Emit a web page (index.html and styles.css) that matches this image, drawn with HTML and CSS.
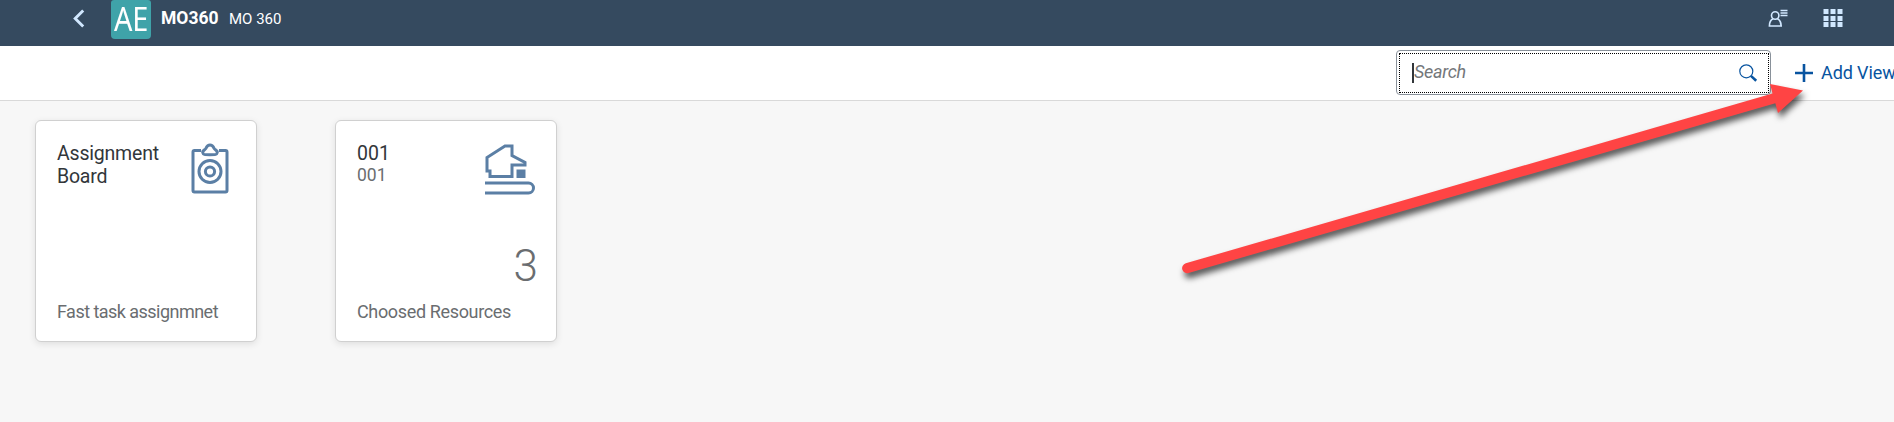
FILE: index.html
```html
<!DOCTYPE html>
<html lang="en">
<head>
<meta charset="utf-8">
<title>MO360</title>
<link rel="stylesheet" href="styles.css">
</head>
<body>
<header class="shell">
  <svg class="back" width="12" height="19" viewBox="0 0 12 19"><path d="M10.200 1.500 2.200 9.500l8 8" fill="none" stroke="#d1e8ff" stroke-width="2.900"/></svg>
  <div class="logo"><span class="logo-text">AE</span></div>
  <h1 class="title">MO360</h1>
  <span class="subtitle">MO 360</span>
  <div class="shell-actions">
    <svg width="20" height="20" viewBox="0 0 20 20" fill="none" stroke="#d1e8ff" stroke-width="1.600"><circle cx="7.200" cy="7.500" r="3.700"/><path d="M5 10.800C2.500 12 1.400 13.800 1.400 18h11.800c0-4.200-1.200-6-3.800-7.200"/><path d="M12.500 2.500h7M12.500 5h7M12.500 7.500h7" stroke-width="1.300"/></svg>
    <svg width="20" height="20" viewBox="0 0 20 20" fill="#d1e8ff"><path d="M.5 1h5v5h-5zM7.500 1h5v5h-5zM14.500 1h5v5h-5zM.5 8h5v5h-5zM7.500 8h5v5h-5zM14.500 8h5v5h-5zM.5 14h5v5h-5zM7.500 14h5v5h-5zM14.500 14h5v5h-5z"/></svg>
  </div>
</header>
<div class="toolbar">
  <div class="search">
    <div class="search-inner">
      <span class="caret"></span><span class="placeholder">Search</span>
      <svg class="lens" width="19" height="19" viewBox="0 0 19 19" fill="none" stroke="#0854a0"><circle cx="7.300" cy="7.300" r="6.500" stroke-width="1.200"/><path d="m11.900 11.900 5.300 4.800" stroke-width="2.600"/></svg>
    </div>
  </div>
  <div class="add-view">
    <svg width="18" height="18" viewBox="0 0 18 18"><path d="M9 0v18M0 9h18" stroke="#0854a0" stroke-width="2.600"/></svg>
    <span class="add-label">Add View</span>
  </div>
</div>
<main class="tiles">
  <article class="tile">
    <div class="tile-head">
      <h2 class="tile-title">Assignment<br>Board</h2>
      <svg class="icon-board" width="38" height="52" viewBox="0 0 38 52" fill="none" stroke="#5b7fa5" stroke-width="3"><path d="M10 8.500H3.500q-1.500 0-1.500 1.500v38.500q0 1.500 1.500 1.500h31q1.500 0 1.500-1.500V10q0-1.500-1.500-1.500H28"/><path d="M12.500 12C10 9 13.500 8.500 15 6.200 16 4 17 3 19 3s3 1 4 3.200c1.500 2.300 5 2.800 2.500 5.800-1 1-12 1-13 0z" stroke-linejoin="round"/><circle cx="19" cy="29.500" r="11"/><circle cx="19" cy="29.500" r="4.600"/></svg>
    </div>
    <div class="tile-foot foot-narrow">Fast task assignmnet</div>
  </article>
  <article class="tile">
    <div class="tile-head">
      <div><h2 class="tile-title code">001</h2><p class="tile-sub">001</p></div>
      <svg class="icon-home" width="51" height="51" viewBox="0 0 51 51" fill="none" stroke="#5b7fa5" stroke-width="3"><path d="M5 32.500V27H2V13.500L20 2h7v9.500l13 7V21H27v11.500z"/><path d="M31.500 25.500h9v8.500h-9z" fill="#5b7fa5" stroke="none"/><path d="M0 39h43.500a5 5 0 0 1 0 10H0"/></svg>
    </div>
    <div class="value">3</div>
    <div class="tile-foot">Choosed Resources</div>
  </article>
</main>
<svg class="arrow" width="1894" height="422" viewBox="0 0 1894 422"><path d="M1185.800 263.300 1772.500 93.500 1770 84l33 6.500-25 22.500-2.700-9.800L1188.500 273a5 5 0 0 1-2.700-9.700z" fill="#ff4444"/></svg>
</body>
</html>
```
FILE: styles.css
```css
* { box-sizing: border-box; }
body { margin: 0; height: 422px; overflow: hidden; background: #f7f7f7; font-family: Roboto, sans-serif; position: relative; }
h1, h2, p { margin: 0; font-weight: 400; }
svg { display: block; flex: none; }
.shell { height: 46px; background: #354a5f; display: flex; align-items: flex-start; padding-left: 73px; color: #fff; white-space: nowrap; }
.back { margin-top: 9px; }
.logo { width: 40px; height: 39px; margin-left: 26px; background: #3fa3a9; border-radius: 3px 3px 4px 4px; display: flex; justify-content: center; }
.logo-text { font: 400 32px/37px "Noto Sans", sans-serif; transform: scaleX(.9); }
.title { width: 60px; margin-left: 10px; font-weight: 700; font-size: 17.500px; line-height: 36px; }
.subtitle { margin-left: 8px; font-size: 15px; line-height: 38px; }
.shell-actions { display: flex; gap: 35px; margin: 8px 51px 0 auto; }
.toolbar { height: 55px; background: #fff; border-bottom: 1px solid #d9d9d9; display: flex; align-items: flex-start; padding: 4px 0 0 1396px; white-space: nowrap; }
.search { width: 375px; height: 45px; border: 1px solid #89919a; border-radius: 4px; padding: 2px 1px 2px 2px; flex: none; }
.search-inner { height: 40px; border: 1px dotted #000; display: flex; align-items: center; padding: 0 10px 0 12px; }
.caret { width: 2px; height: 20px; background: #32363a; }
.placeholder { font-size: 18px; font-style: italic; color: #74777a; letter-spacing: -.3px; padding-bottom: 3px; }
.lens { margin: 0 0 0 auto; }
.add-view { display: flex; align-items: center; gap: 8px; height: 45px; margin-left: 24px; color: #0854a0; }
.add-label { font-size: 18px; letter-spacing: -.1px; }
.tiles { display: flex; gap: 78px; padding: 19px 35px; }
.tile { width: 222px; height: 222px; background: #fff; border: 1px solid #d0d0d0; border-radius: 6px; box-shadow: 0 2px 7px rgba(0,0,0,.1); padding: 21px 20px 14px 21px; display: flex; flex-direction: column; }
.tile-head { display: flex; justify-content: space-between; }
.tile-title { font-size: 19.500px; line-height: 23px; letter-spacing: -.2px; color: #32363a; }
.code { letter-spacing: 0; }
.tile-sub { font-size: 17.500px; line-height: 21px; color: #6a6d70; }
.icon-board { margin: 0 7px 0 0; }
.icon-home { margin-top: 2px; }
.value { font-weight: 300; font-size: 44px; line-height: 50px; color: #6a6d70; text-align: right; margin-top: 46px; margin-right: -2px; }
.tile-foot { margin-top: auto; font-size: 18px; line-height: 30px; letter-spacing: -.35px; color: #6a6d70; white-space: nowrap; }
.foot-narrow { letter-spacing: -.53px; }
.arrow { position: absolute; left: 0; top: 0; filter: drop-shadow(2px 5px 3px rgba(0,0,0,.65)); pointer-events: none; }
```
